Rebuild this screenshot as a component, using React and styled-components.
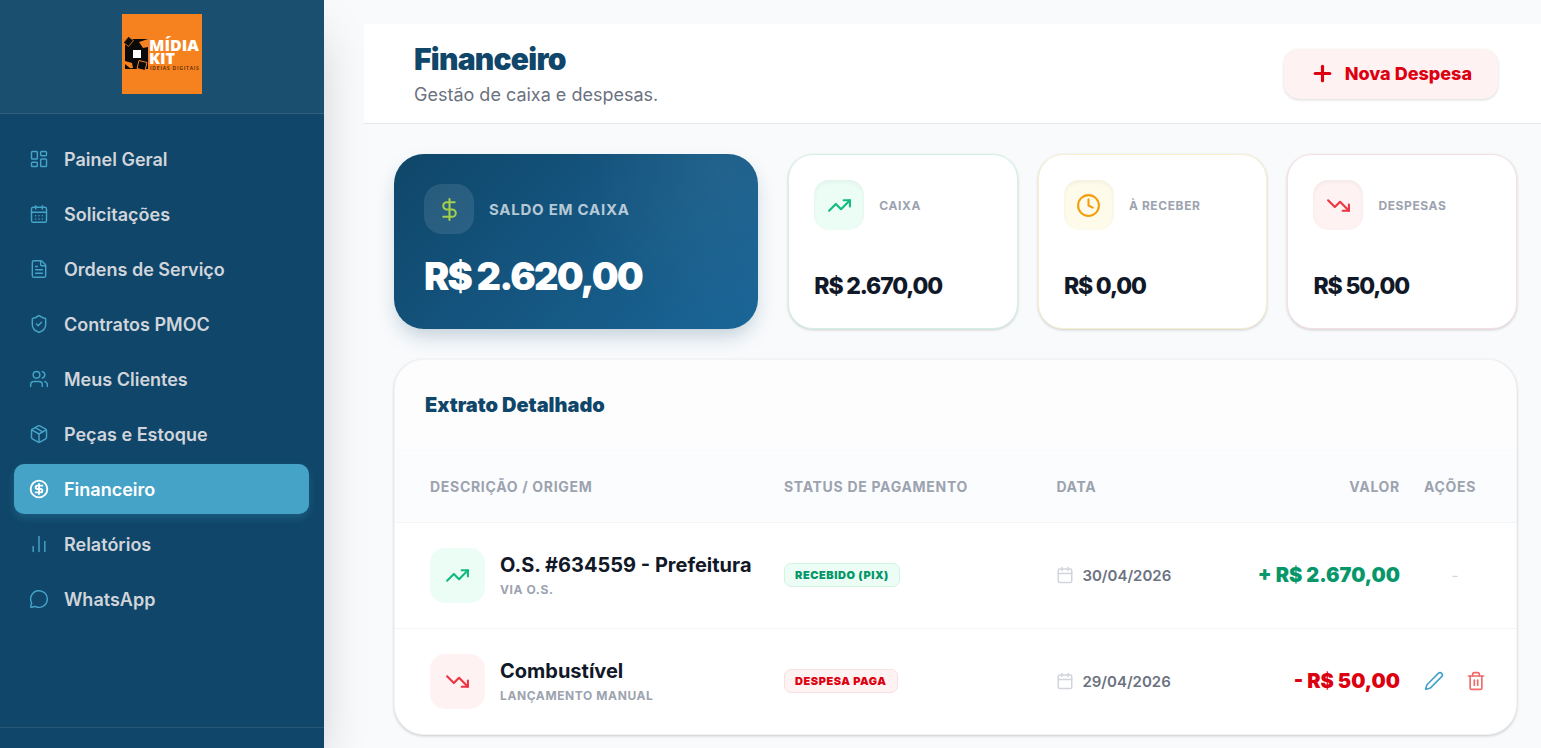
import styled, { createGlobalStyle } from "styled-components";
import {
  Calendar,
  CalendarDays,
  ChartNoAxesColumn,
  CircleDollarSign,
  Clock,
  DollarSign,
  FileText,
  LayoutDashboard,
  MessageCircle,
  Package,
  Pen,
  Plus,
  ShieldCheck,
  Trash2,
  TrendingDown,
  TrendingUp,
  Users,
} from "lucide-react";

const GlobalStyle = createGlobalStyle`
  *, *::before, *::after {
    box-sizing: border-box;
  }

  body {
    margin: 0;
    background: #f8fafc;
    color: #111827;
    font-family: Inter, "Liberation Sans", sans-serif;
  }

  h1, h2, p {
    margin: 0;
  }

  button {
    font-family: inherit;
    cursor: pointer;
  }
`;

const tones = {
  green: { icon: "#10b981", text: "#059669", soft: "#ecfdf5", line: "#d3f2e4" },
  amber: { icon: "#f59e0b", text: "#d97706", soft: "#fffbeb", line: "#f8efcc" },
  red: { icon: "#ef3340", text: "#dc0010", soft: "#fef2f2", line: "#f6e0e2" },
};

const Shell = styled.div`
  display: flex;
  height: 100vh;
  overflow: hidden;
`;

const Sidebar = styled.aside`
  position: relative;
  z-index: 1;
  display: flex;
  flex-direction: column;
  flex: none;
  width: 324px;
  background: #0f4669;
  box-shadow: 0 25px 50px -12px rgba(0, 0, 0, 0.25);
`;

const Brand = styled.div`
  display: flex;
  justify-content: center;
  padding: 14px 0 19px;
  background: rgba(255, 255, 255, 0.05);
  border-bottom: 1px solid rgba(255, 255, 255, 0.1);
`;

const Nav = styled.nav`
  display: flex;
  flex: 1;
  flex-direction: column;
  gap: 5px;
  padding: 20px 15px 20px 14px;
`;

const NavItem = styled.a`
  display: flex;
  align-items: center;
  gap: 15px;
  height: 50px;
  padding: 0 15px;
  border-radius: 10px;
  background: ${({ $active }) => ($active ? "#45a3c7" : "transparent")};
  box-shadow: ${({ $active }) =>
    $active ? "0 4px 8px rgba(69, 163, 199, 0.25)" : "none"};
  color: ${({ $active }) => ($active ? "#ffffff" : "#d1d5db")};
  font-size: 18px;
  font-weight: 600;
  text-decoration: none;

  svg {
    color: ${({ $active }) => ($active ? "#ffffff" : "#45a3c7")};
  }
`;

const SidebarFooter = styled.div`
  height: 21px;
  border-top: 1px solid rgba(255, 255, 255, 0.1);
`;

const Main = styled.main`
  flex: 1;
  min-width: 0;
  padding: 24px 0 0 40px;
  overflow: hidden;
`;

const PageHeader = styled.header`
  display: flex;
  align-items: center;
  justify-content: space-between;
  height: 100px;
  padding: 0 43px 0 50px;
  background: #ffffff;
  border-bottom: 1px solid #e5e7eb;
`;

const PageTitle = styled.h1`
  color: #0f4669;
  font-size: 30px;
  font-weight: 900;
  line-height: 36px;
  letter-spacing: -0.025em;
`;

const PageSubtitle = styled.p`
  margin-top: 5px;
  color: #6b7280;
  font-size: 18px;
  line-height: 25px;
`;

const NewExpenseButton = styled.button`
  display: flex;
  align-items: center;
  gap: 10px;
  height: 50px;
  padding: 0 26px;
  border: 0;
  border-radius: 15px;
  background: #fef2f2;
  box-shadow: 0 1px 3px rgba(0, 0, 0, 0.15);
  color: #dc0010;
  font-size: 18px;
  font-weight: 800;
`;

const Content = styled.div`
  padding: 30px 24px 30px 30px;
`;

const Summary = styled.section`
  display: grid;
  grid-template-columns: 1fr 2fr;
  gap: 30px;
`;

const SmallCards = styled.div`
  display: grid;
  grid-template-columns: repeat(3, 1fr);
  gap: 20px;
`;

const BalanceCard = styled.div`
  display: flex;
  flex-direction: column;
  justify-content: space-between;
  height: 175px;
  padding: 30px;
  border-radius: 30px;
  background: radial-gradient(
      circle at 90% 10%,
      rgba(255, 255, 255, 0.05),
      rgba(255, 255, 255, 0) 150px
    ),
    linear-gradient(135deg, #0f4669, #1a6698);
  box-shadow: 0 10px 20px -4px rgba(15, 70, 105, 0.25);
  color: #ffffff;
`;

const StatCard = styled.div`
  display: flex;
  flex-direction: column;
  justify-content: space-between;
  height: 175px;
  padding: 25px;
  border: 1px solid ${({ $tone }) => tones[$tone].line};
  border-radius: 25px;
  background: #ffffff;
  box-shadow: 0 1px 3px rgba(0, 0, 0, 0.18);
`;

const CardTop = styled.div`
  display: flex;
  align-items: center;
  gap: 15px;
`;

const BalanceIcon = styled.div`
  display: grid;
  place-items: center;
  width: 50px;
  height: 50px;
  border-radius: 18px;
  background: rgba(255, 255, 255, 0.1);
  color: #a3cf4b;
`;

const StatIcon = styled.div`
  display: grid;
  place-items: center;
  width: 50px;
  height: 50px;
  border-radius: 15px;
  background: ${({ $tone }) => tones[$tone].soft};
  box-shadow: inset 0 2px 4px rgba(0, 0, 0, 0.05);
  color: ${({ $tone }) => tones[$tone].icon};
`;

const BalanceLabel = styled.span`
  color: rgba(255, 255, 255, 0.7);
  font-size: 15px;
  font-weight: 700;
  letter-spacing: 0.05em;
`;

const StatLabel = styled.span`
  color: #9ca3af;
  font-size: 12px;
  font-weight: 700;
  letter-spacing: 0.05em;
`;

const BalanceAmount = styled.p`
  font-size: 38px;
  font-weight: 900;
  line-height: 45px;
  letter-spacing: -0.05em;
`;

const StatAmount = styled.p`
  font-size: 23px;
  font-weight: 800;
  line-height: 34px;
  letter-spacing: -0.05em;
`;

const Statement = styled.section`
  margin-top: 30px;
  border: 1px solid #f3f4f6;
  border-radius: 30px;
  background: #ffffff;
  box-shadow: 0 1px 3px rgba(0, 0, 0, 0.2);
  overflow: hidden;
`;

const StatementHeader = styled.div`
  padding: 30px;
  border-bottom: 1px solid #f9fafb;
  background: #fdfdfe;
`;

const StatementTitle = styled.h2`
  color: #0f4669;
  font-size: 20px;
  font-weight: 900;
  line-height: 30px;
`;

const Table = styled.table`
  width: 100%;
  border-collapse: collapse;
  table-layout: fixed;
`;

const HeadCell = styled.th`
  width: ${({ $width }) => $width || "auto"};
  height: 71px;
  padding: 0 12px;
  border-bottom: 1px solid #f3f4f6;
  background: #fbfcfe;
  color: #9ca3af;
  font-size: 14px;
  font-weight: 700;
  letter-spacing: 0.05em;
  text-align: ${({ $align }) => $align || "left"};
  white-space: nowrap;

  &:first-child {
    padding-left: 35px;
  }
`;

const Row = styled.tr`
  & + & td {
    border-top: 1px solid #f3f4f6;
  }
`;

const Cell = styled.td`
  height: 106px;
  padding: 0 12px;
  text-align: ${({ $align }) => $align || "left"};
  white-space: nowrap;

  &:first-child {
    padding-left: 35px;
  }

  &:last-child {
    padding-right: 30px;
  }
`;

const Entry = styled.div`
  display: flex;
  align-items: center;
  gap: 15px;
`;

const EntryIcon = styled.div`
  display: grid;
  place-items: center;
  flex: none;
  width: 55px;
  height: 55px;
  border-radius: 15px;
  background: ${({ $tone }) => tones[$tone].soft};
  color: ${({ $tone }) => tones[$tone].icon};
`;

const EntryName = styled.p`
  font-size: 20px;
  font-weight: 700;
  line-height: 30px;
`;

const EntryOrigin = styled.p`
  color: #9ca3af;
  font-size: 12px;
  font-weight: 700;
  line-height: 20px;
  letter-spacing: 0.05em;
`;

const Badge = styled.span`
  display: inline-block;
  padding: 0 10px;
  border: 1px solid ${({ $tone }) => tones[$tone].line};
  border-radius: 7px;
  background: ${({ $tone }) => tones[$tone].soft};
  color: ${({ $tone }) => tones[$tone].text};
  font-size: 11px;
  font-weight: 900;
  line-height: 22px;
  letter-spacing: 0.05em;
`;

const DateInfo = styled.div`
  display: flex;
  align-items: center;
  gap: 8px;
  color: #6b7280;
  font-size: 15px;
  font-weight: 600;

  svg {
    color: #d1d5db;
  }
`;

const Value = styled.span`
  color: ${({ $tone }) => tones[$tone].text};
  font-size: 20px;
  font-weight: 900;
`;

const Actions = styled.div`
  display: flex;
  justify-content: space-between;
`;

const IconButton = styled.button`
  display: grid;
  place-items: center;
  padding: 0;
  border: 0;
  background: none;
  color: ${({ $danger }) => ($danger ? "#f06a6a" : "#45a3c7")};
`;

const Dash = styled.span`
  color: #d1d5db;
  font-size: 15px;
`;

const navItems = [
  { label: "Painel Geral", icon: LayoutDashboard },
  { label: "Solicitações", icon: CalendarDays },
  { label: "Ordens de Serviço", icon: FileText },
  { label: "Contratos PMOC", icon: ShieldCheck },
  { label: "Meus Clientes", icon: Users },
  { label: "Peças e Estoque", icon: Package },
  { label: "Financeiro", icon: CircleDollarSign, active: true },
  { label: "Relatórios", icon: ChartNoAxesColumn },
  { label: "WhatsApp", icon: MessageCircle },
];

const stats = [
  { label: "CAIXA", amount: "R$ 2.670,00", tone: "green", icon: TrendingUp },
  { label: "À RECEBER", amount: "R$ 0,00", tone: "amber", icon: Clock },
  { label: "DESPESAS", amount: "R$ 50,00", tone: "red", icon: TrendingDown },
];

const entries = [
  {
    name: "O.S. #634559 - Prefeitura",
    origin: "VIA O.S.",
    status: "RECEBIDO (PIX)",
    date: "30/04/2026",
    value: "+ R$ 2.670,00",
    tone: "green",
    icon: TrendingUp,
  },
  {
    name: "Combustível",
    origin: "LANÇAMENTO MANUAL",
    status: "DESPESA PAGA",
    date: "29/04/2026",
    value: "- R$ 50,00",
    tone: "red",
    icon: TrendingDown,
    editable: true,
  },
];

const Logo = () => (
  <svg width="80" height="80" viewBox="0 0 80 80" role="img" aria-label="Mídia Kit">
    <rect width="80" height="80" fill="#f6821f" />
    <path d="M3 30l6-5h17v30H3z" fill="#0b0a0a" />
    <path d="M17 28l9-3v8l-5 1z" fill="#f6821f" />
    <path d="M3 47l7 2 1 5-8 1z" fill="#f6821f" />
    <path d="M3 50l6 5H3z" fill="#0b0a0a" />
    <path
      d="M6.500 22.500l5 4-5 6-5-4z"
      fill="#0b0a0a"
      stroke="#f6821f"
      strokeWidth="0.800"
    />
    <path
      d="M17 46.500l8 2-2 8-8-2z"
      fill="#0b0a0a"
      stroke="#f6821f"
      strokeWidth="1"
    />
    <rect x="11" y="36" width="8" height="8" fill="#ffffff" />
    <text
      x="27"
      y="37"
      fill="#ffffff"
      fontFamily="Open Sans, sans-serif"
      fontSize="16"
      fontWeight="800"
    >
      MÍDIA
    </text>
    <text
      x="27"
      y="50"
      fill="#ffffff"
      fontFamily="Open Sans, sans-serif"
      fontSize="16"
      fontWeight="800"
    >
      KIT
    </text>
    <text
      x="28"
      y="56"
      fill="#4a250a"
      fontFamily="Open Sans, sans-serif"
      fontSize="5"
      fontWeight="600"
      letterSpacing="0.8"
    >
      IDEIAS DIGITAIS
    </text>
  </svg>
);

const App = () => (
  <>
    <GlobalStyle />
    <Shell>
      <Sidebar>
        <Brand>
          <Logo />
        </Brand>
        <Nav>
          {navItems.map(({ label, icon: Icon, active }) => (
            <NavItem
              key={label}
              href="#"
              $active={active}
              aria-current={active ? "page" : undefined}
            >
              <Icon size={20} strokeWidth={active ? 2.25 : 1.75} />
              {label}
            </NavItem>
          ))}
        </Nav>
        <SidebarFooter />
      </Sidebar>

      <Main>
        <PageHeader>
          <div>
            <PageTitle>Financeiro</PageTitle>
            <PageSubtitle>Gestão de caixa e despesas.</PageSubtitle>
          </div>
          <NewExpenseButton type="button">
            <Plus size={25} strokeWidth={3} />
            Nova Despesa
          </NewExpenseButton>
        </PageHeader>

        <Content>
          <Summary>
            <BalanceCard>
              <CardTop>
                <BalanceIcon>
                  <DollarSign size={25} />
                </BalanceIcon>
                <BalanceLabel>SALDO EM CAIXA</BalanceLabel>
              </CardTop>
              <BalanceAmount>R$ 2.620,00</BalanceAmount>
            </BalanceCard>
            <SmallCards>
              {stats.map(({ label, amount, tone, icon: Icon }) => (
                <StatCard key={label} $tone={tone}>
                  <CardTop>
                    <StatIcon $tone={tone}>
                      <Icon size={25} />
                    </StatIcon>
                    <StatLabel>{label}</StatLabel>
                  </CardTop>
                  <StatAmount>{amount}</StatAmount>
                </StatCard>
              ))}
            </SmallCards>
          </Summary>

          <Statement>
            <StatementHeader>
              <StatementTitle>Extrato Detalhado</StatementTitle>
            </StatementHeader>
            <Table>
              <thead>
                <tr>
                  <HeadCell $width="377px">DESCRIÇÃO / ORIGEM</HeadCell>
                  <HeadCell $width="24.3%">STATUS DE PAGAMENTO</HeadCell>
                  <HeadCell>DATA</HeadCell>
                  <HeadCell $align="right">VALOR</HeadCell>
                  <HeadCell $width="104px">AÇÕES</HeadCell>
                </tr>
              </thead>
              <tbody>
                {entries.map(({ icon: Icon, ...entry }) => (
                  <Row key={entry.name}>
                    <Cell>
                      <Entry>
                        <EntryIcon $tone={entry.tone}>
                          <Icon size={25} />
                        </EntryIcon>
                        <div>
                          <EntryName>{entry.name}</EntryName>
                          <EntryOrigin>{entry.origin}</EntryOrigin>
                        </div>
                      </Entry>
                    </Cell>
                    <Cell>
                      <Badge $tone={entry.tone}>{entry.status}</Badge>
                    </Cell>
                    <Cell>
                      <DateInfo>
                        <Calendar size={18} />
                        {entry.date}
                      </DateInfo>
                    </Cell>
                    <Cell $align="right">
                      <Value $tone={entry.tone}>{entry.value}</Value>
                    </Cell>
                    <Cell $align="center">
                      {entry.editable ? (
                        <Actions>
                          <IconButton type="button" aria-label="Editar">
                            <Pen size={20} />
                          </IconButton>
                          <IconButton type="button" aria-label="Excluir" $danger>
                            <Trash2 size={20} />
                          </IconButton>
                        </Actions>
                      ) : (
                        <Dash>-</Dash>
                      )}
                    </Cell>
                  </Row>
                ))}
              </tbody>
            </Table>
          </Statement>
        </Content>
      </Main>
    </Shell>
  </>
);

export default App;
